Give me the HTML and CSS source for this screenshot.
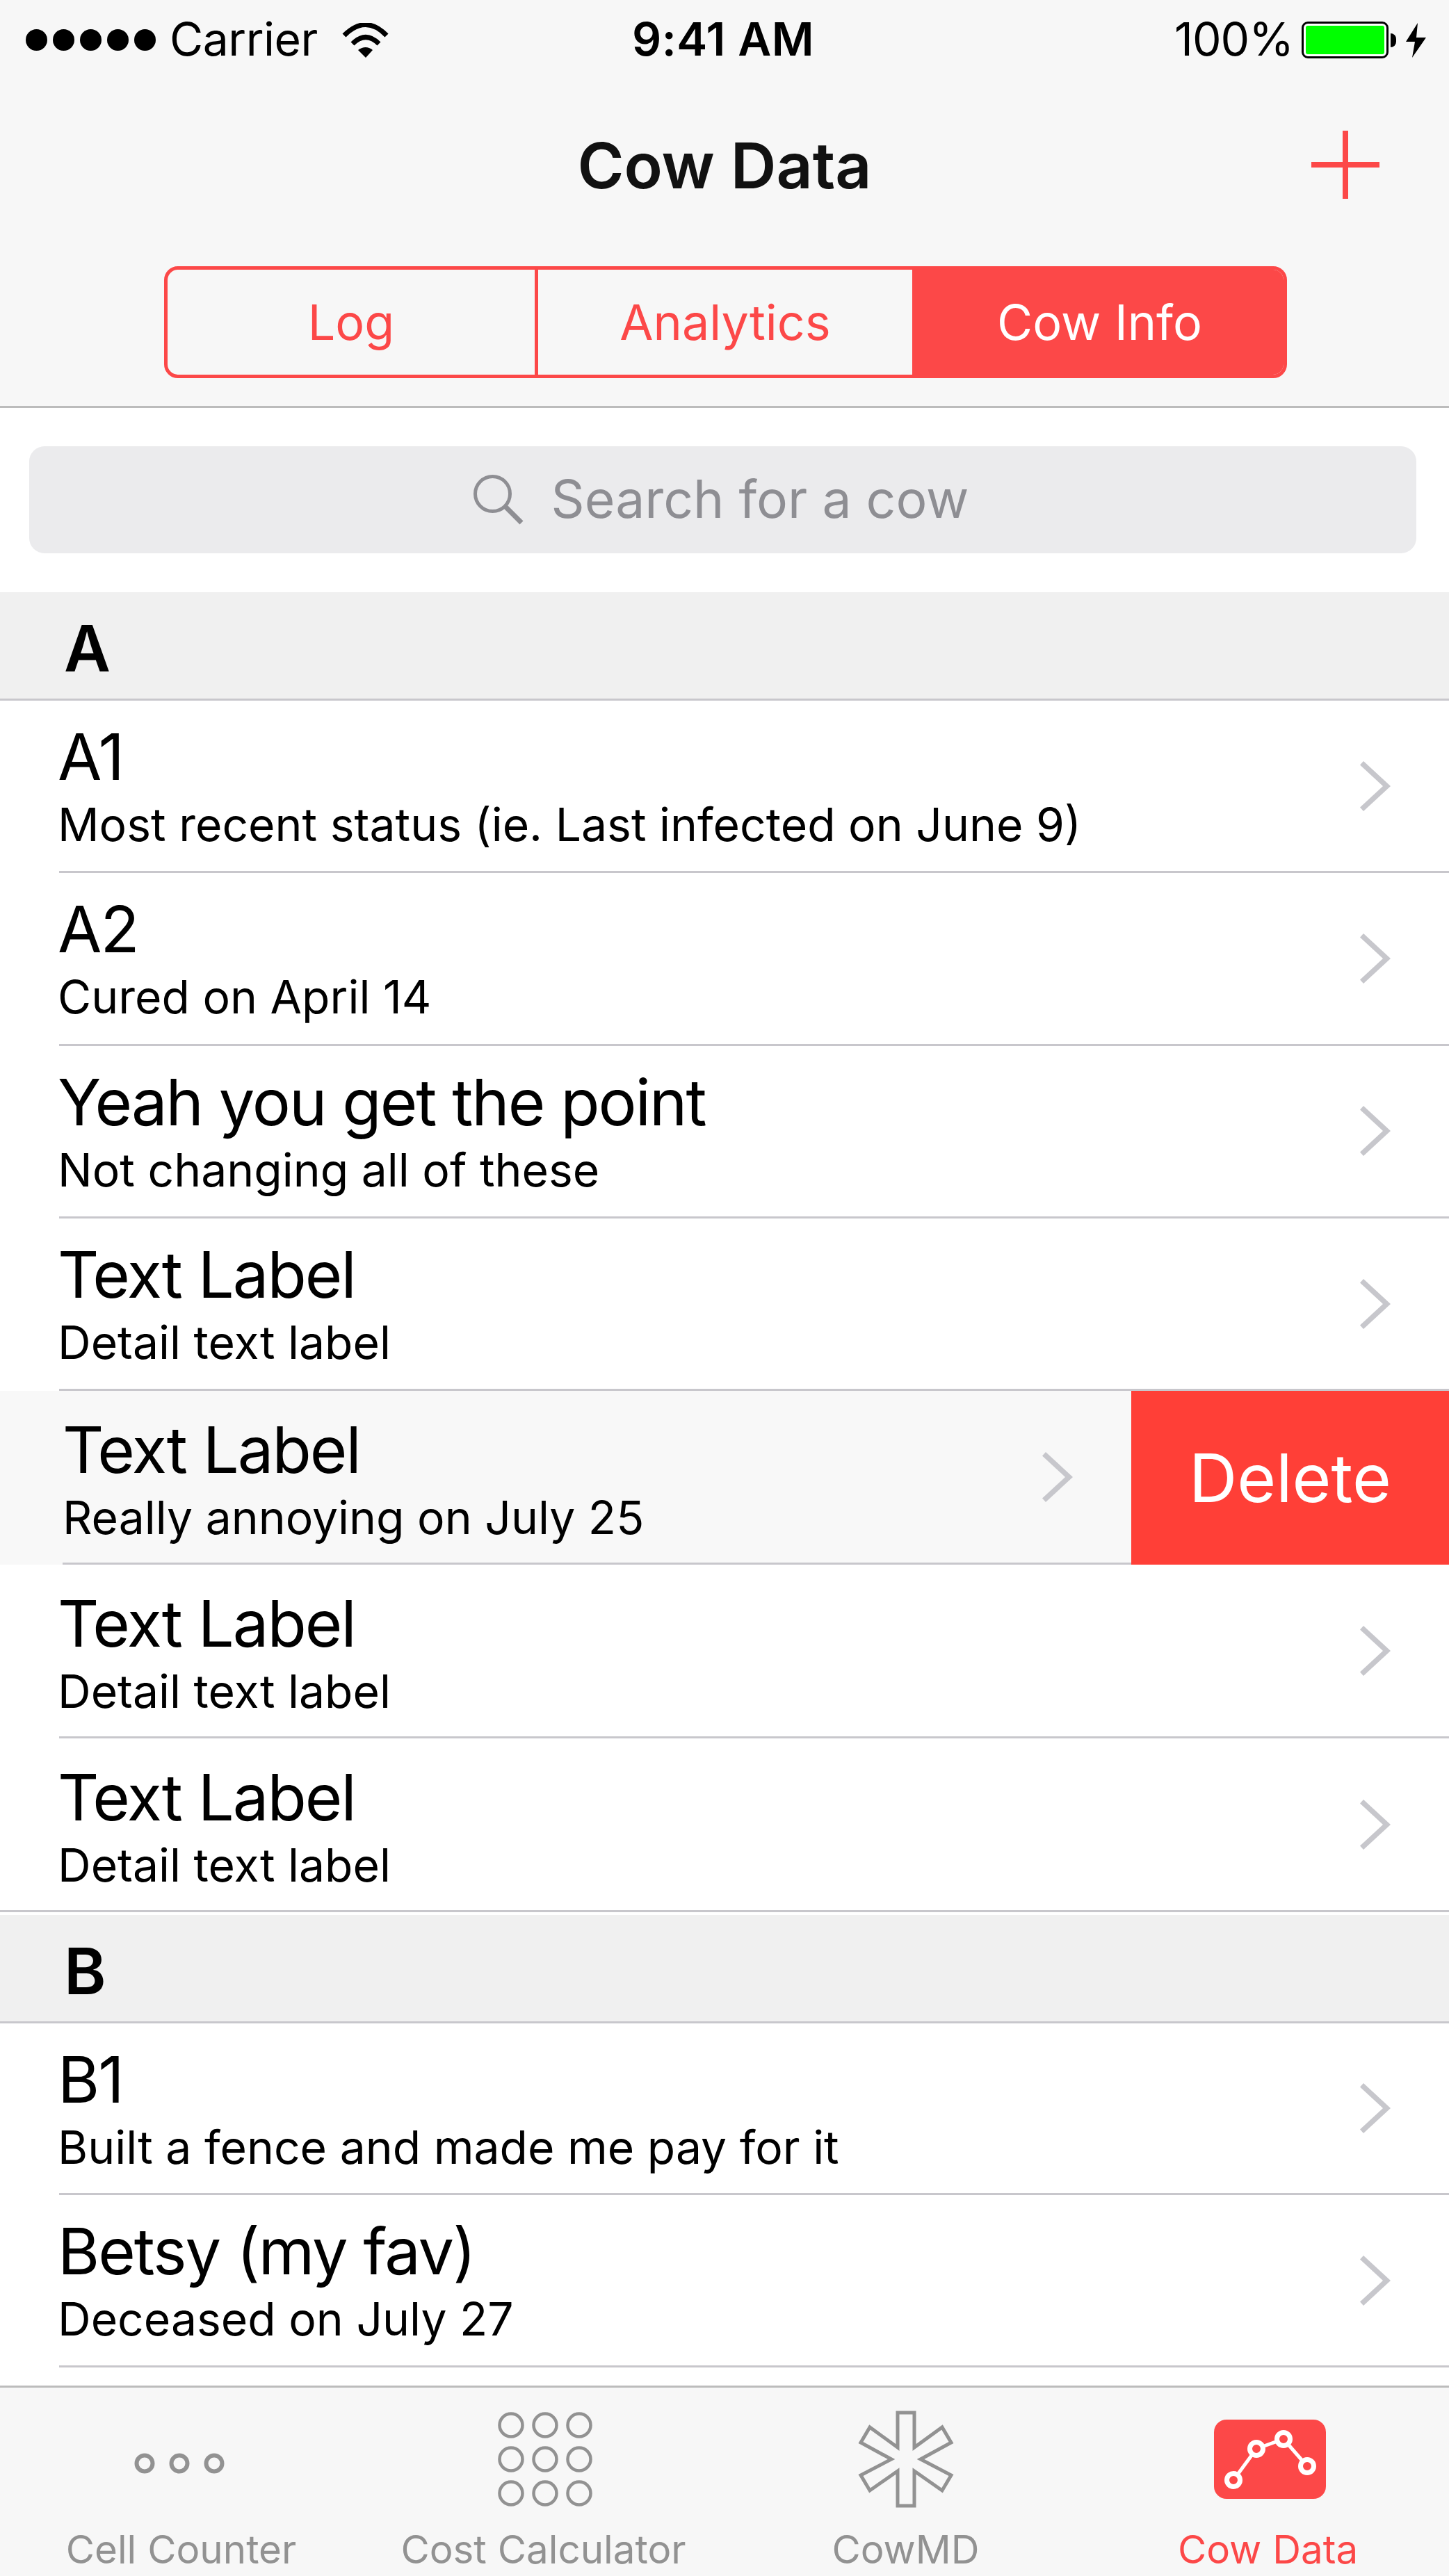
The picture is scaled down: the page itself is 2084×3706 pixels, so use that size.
FILE: index.html
```html
<!DOCTYPE html>
<html lang="en">
<head>
    <meta charset="UTF-8">
    <title>Cow Data</title>
    <link rel="stylesheet" href="styles.css">
</head>
<body>
    <svg class="defs" width="0" height="0">
        <symbol id="chev" viewBox="0 0 44 72">
            <polygon points="5,0 44,36 5,72 0,66.5 33,36 0,5.5" fill="#c7c7cc"/>
        </symbol>
    </svg>

    <div class="phone-screen">
        <div class="top-bars">
            <div class="status-bar">
                <div class="status-left">
                    <div class="signal">
                        <span class="dot"></span><span class="dot"></span><span class="dot"></span><span class="dot"></span><span class="dot"></span>
                    </div>
                    <span class="carrier">Carrier</span>
                    <svg class="wifi" width="67" height="50" viewBox="493 31 67 50">
                        <path d="M496 49 Q527 18 557 49" fill="none" stroke="#000" stroke-width="7"/>
                        <path d="M508 61 Q527 42 546 61" fill="none" stroke="#000" stroke-width="7"/>
                        <path d="M516 70 Q527 62 537 70 L527 81 Z" fill="#000"/>
                    </svg>
                </div>
                <div class="status-time">9:41 AM</div>
                <div class="status-right">
                    <span class="percent">100%</span>
                    <div class="battery"><div class="battery-fill"></div></div>
                    <div class="battery-nub"></div>
                    <svg class="bolt" width="29" height="50" viewBox="0 0 29 50">
                        <path d="M17 0 L0 27 L13 27 L9 50 L29 21 L15 21 Z" fill="#000"/>
                    </svg>
                </div>
            </div>

            <div class="nav-bar">
                <h1>Cow Data</h1>
                <svg class="plus" width="98" height="98" viewBox="0 0 98 98">
                    <path d="M49 0 V98 M0 49 H98" stroke="#fc4848" stroke-width="8" fill="none"/>
                </svg>
            </div>

            <div class="segment-wrap">
                <div class="segment">
                    <div class="seg-item">Log</div>
                    <div class="seg-item">Analytics</div>
                    <div class="seg-item active">Cow Info</div>
                </div>
            </div>
        </div>

        <div class="content-area">
            <div class="search-wrap">
                <div class="search-field">
                    <svg class="search-icon" width="72" height="72" viewBox="0 0 72 72">
                        <circle cx="27.5" cy="27.5" r="25" fill="none" stroke="#8e8e93" stroke-width="5"/>
                        <path d="M45 45 L69 69" stroke="#8e8e93" stroke-width="7" fill="none"/>
                    </svg>
                    <span>Search for a cow</span>
                </div>
            </div>

            <div class="section-head">A</div>

            <div class="row"><div class="row-inner">
                <div class="details">
                    <span class="name">A1</span>
                    <span class="status">Most recent status (ie. Last infected on June 9)</span>
                </div>
                <svg class="chevron"><use href="#chev"/></svg>
            </div></div>
            <div class="row"><div class="row-inner">
                <div class="details">
                    <span class="name">A2</span>
                    <span class="status">Cured on April 14</span>
                </div>
                <svg class="chevron"><use href="#chev"/></svg>
            </div></div>
            <div class="row"><div class="row-inner">
                <div class="details">
                    <span class="name">Yeah you get the point</span>
                    <span class="status">Not changing all of these</span>
                </div>
                <svg class="chevron"><use href="#chev"/></svg>
            </div></div>
            <div class="row"><div class="row-inner">
                <div class="details">
                    <span class="name">Text Label</span>
                    <span class="status">Detail text label</span>
                </div>
                <svg class="chevron"><use href="#chev"/></svg>
            </div></div>

            <div class="row tall swiped">
                <div class="row-inner">
                    <div class="details">
                        <span class="name">Text Label</span>
                        <span class="status">Really annoying on July 25</span>
                    </div>
                    <svg class="chevron"><use href="#chev"/></svg>
                </div>
                <div class="delete-btn">Delete</div>
            </div>

            <div class="row tall"><div class="row-inner">
                <div class="details">
                    <span class="name">Text Label</span>
                    <span class="status">Detail text label</span>
                </div>
                <svg class="chevron"><use href="#chev"/></svg>
            </div></div>
            <div class="row tall last"><div class="row-inner">
                <div class="details">
                    <span class="name">Text Label</span>
                    <span class="status">Detail text label</span>
                </div>
                <svg class="chevron"><use href="#chev"/></svg>
            </div></div>

            <div class="section-head">B</div>

            <div class="row short"><div class="row-inner">
                <div class="details">
                    <span class="name">B1</span>
                    <span class="status">Built a fence and made me pay for it</span>
                </div>
                <svg class="chevron"><use href="#chev"/></svg>
            </div></div>
            <div class="row short"><div class="row-inner">
                <div class="details">
                    <span class="name">Betsy (my fav)</span>
                    <span class="status">Deceased on July 27</span>
                </div>
                <svg class="chevron"><use href="#chev"/></svg>
            </div></div>
        </div>

        <div class="tab-bar">
            <div class="tab">
                <div class="tab-icon">
                    <svg class="icon-dots" width="130" height="32" viewBox="0 0 130 32">
                        <g fill="none" stroke="#929292" stroke-width="6">
                            <circle cx="15" cy="16" r="11.5"/>
                            <circle cx="65" cy="16" r="11.5"/>
                            <circle cx="115" cy="16" r="11.5"/>
                        </g>
                    </svg>
                </div>
                <span class="tab-label">Cell Counter</span>
            </div>
            <div class="tab">
                <div class="tab-icon">
                    <svg class="icon-grid" width="136" height="136" viewBox="0 0 136 136">
                        <g fill="none" stroke="#929292" stroke-width="4.5">
                            <circle cx="19" cy="19" r="16.5"/>
                            <circle cx="68" cy="19" r="16.5"/>
                            <circle cx="117" cy="19" r="16.5"/>
                            <circle cx="19" cy="68" r="16.5"/>
                            <circle cx="68" cy="68" r="16.5"/>
                            <circle cx="117" cy="68" r="16.5"/>
                            <circle cx="19" cy="117" r="16.5"/>
                            <circle cx="68" cy="117" r="16.5"/>
                            <circle cx="117" cy="117" r="16.5"/>
                        </g>
                    </svg>
                </div>
                <span class="tab-label">Cost Calculator</span>
            </div>
            <div class="tab">
                <div class="tab-icon">
                    <svg width="142" height="148" viewBox="190 85 142 148">
                        <path d="M249 92 H273 V142 L313 113 L326 135 L282 159 L326 182 L313 204 L273 176 V226 H249 V176 L209 204 L196 182 L240 159 L196 135 L209 113 L249 142 Z" fill="none" stroke="#929292" stroke-width="5"/>
                    </svg>
                </div>
                <span class="tab-label">CowMD</span>
            </div>
            <div class="tab active">
                <div class="tab-icon">
                    <svg class="icon-chart" width="161" height="114" viewBox="0 0 161 114">
                        <rect width="161" height="114" rx="18" fill="#fc4848"/>
                        <polyline points="28,87 61,42 100,28 134,67" fill="none" stroke="#fff" stroke-width="5"/>
                        <g fill="#fc4848" stroke="#fff" stroke-width="7">
                            <circle cx="28" cy="87" r="9.5"/>
                            <circle cx="61" cy="42" r="9.5"/>
                            <circle cx="100" cy="28" r="9.5"/>
                            <circle cx="134" cy="67" r="9.5"/>
                        </g>
                    </svg>
                </div>
                <span class="tab-label">Cow Data</span>
            </div>
        </div>
    </div>
</body>
</html>
```

FILE: styles.css
```css
:root {
    --accent-red: #fc4848;
    --bar-grey: #f7f7f7;
    --line-grey: #c8c7cc;
}

body {
    margin: 0;
    padding: 0;
    background: white;
    font-family: Inter, 'Liberation Sans', sans-serif;
    color: #000;
}

.defs {
    display: block;
    height: 0;
}

.phone-screen {
    width: 2084px;
    height: 3706px;
    overflow: hidden;
    display: flex;
    flex-direction: column;
}

.top-bars {
    background: var(--bar-grey);
    border-bottom: 3px solid #bcbcbc;
}

/* status bar */
.status-bar {
    height: 115px;
    padding: 0 33px 0 37px;
    display: flex;
    align-items: center;
    font-size: 66px;
}

.status-left,
.status-right {
    flex: 1;
    display: flex;
    align-items: center;
}

.status-right {
    justify-content: flex-end;
}

.signal {
    display: flex;
    gap: 8px;
}

.dot {
    width: 31px;
    height: 31px;
    border-radius: 50%;
    background: #000;
}

.carrier,
.status-time,
.percent {
    padding-bottom: 4px;
}

.carrier {
    margin-left: 20px;
    letter-spacing: -0.5px;
}

.wifi {
    margin-left: 35px;
}

.status-time {
    font-weight: 600;
    margin-right: 8px;
    letter-spacing: 0.5px;
}

.percent {
    margin-right: 12px;
    letter-spacing: -1px;
}

.battery {
    width: 125px;
    height: 53px;
    box-sizing: border-box;
    border: 3px solid #000;
    border-radius: 9px;
    padding: 3px;
    background: white;
}

.battery-fill {
    height: 100%;
    background: #00ff00;
    border-radius: 3px;
}

.battery-nub {
    width: 8px;
    height: 20px;
    margin-left: 3px;
    background: #000;
    border-radius: 0 10px 10px 0;
}

.bolt {
    margin-left: 14px;
}

/* nav bar */
.nav-bar {
    height: 245px;
    display: flex;
    align-items: center;
    justify-content: center;
    position: relative;
}

.nav-bar h1 {
    margin: 0;
    font-size: 91px;
    font-weight: 600;
    color: #111;
}

.plus {
    position: absolute;
    right: 100px;
    top: 73px;
}

/* segmented control */
.segment-wrap {
    padding: 23px 233px 40px 236px;
}

.segment {
    height: 161px;
    box-sizing: border-box;
    border: 5px solid var(--accent-red);
    border-radius: 20px;
    display: grid;
    grid-template-columns: 528px 543px 1fr;
    overflow: hidden;
    font-size: 70px;
    color: var(--accent-red);
}

.seg-item {
    display: flex;
    align-items: center;
    justify-content: center;
    border-left: 5px solid var(--accent-red);
}

.seg-item:first-child {
    border-left: none;
}

.seg-item.active {
    background: var(--accent-red);
    color: white;
}

/* list */
.content-area {
    flex: 1;
    overflow: hidden;
}

.search-wrap {
    padding: 55px 47px 56px 42px;
}

.search-field {
    height: 154px;
    padding: 0 5px 4px 0;
    box-sizing: border-box;
    background: #ebebed;
    border-radius: 22px;
    display: flex;
    align-items: center;
    justify-content: center;
    font-size: 75px;
    color: #8e8e93;
}

.search-icon {
    margin-right: 40px;
    margin-top: 4px;
}

.section-head {
    height: 145px;
    padding: 8px 0 0 92px;
    background: #f0f0f0;
    border-bottom: 3px solid var(--line-grey);
    display: flex;
    align-items: center;
    font-size: 92px;
    font-weight: 600;
}

.row {
    height: 248.3px;
    display: flex;
}

.row.tall {
    height: 250px;
}

.row.short {
    height: 247.3px;
}

.row-inner {
    flex: 1;
    margin-left: 85px;
    padding-right: 84px;
    display: flex;
    align-items: center;
    justify-content: space-between;
    border-bottom: 3px solid var(--line-grey);
}

.row.last {
    margin-bottom: 4px;
}

.row.last .row-inner {
    margin-left: 0;
    padding-left: 85px;
}

.details {
    min-width: 0;
    margin-left: -2px;
}

.row.tall .details {
    padding-top: 6px;
}

.name {
    display: block;
    font-size: 92px;
    line-height: 112px;
    letter-spacing: -2px;
}

.status {
    display: block;
    font-size: 66px;
    line-height: 83px;
}

.chevron {
    width: 44px;
    height: 72px;
    flex: none;
}

.row.swiped {
    background: #f8f8f8;
}

.row.swiped .row-inner {
    margin-left: 90px;
    padding-left: 2px;
}

.delete-btn {
    width: 457px;
    background: #ff3f37;
    color: white;
    font-size: 96px;
    display: flex;
    align-items: center;
    justify-content: center;
}

/* tab bar */
.tab-bar {
    height: 271px;
    background: var(--bar-grey);
    border-top: 3px solid #bcbcbc;
    display: flex;
}

.tab {
    flex: 1;
    display: flex;
    flex-direction: column;
    align-items: center;
    color: #929292;
}

.tab.active {
    color: var(--accent-red);
}

.tab-icon {
    height: 205px;
    display: flex;
    align-items: center;
    justify-content: center;
}

.icon-dots {
    margin: 12px 6px 0 0;
}

.icon-grid {
    margin-left: 4px;
}

.icon-chart {
    margin-left: 5px;
}

.tab-label {
    font-size: 56.5px;
    line-height: 60px;
    margin-top: -2px;
}
```
